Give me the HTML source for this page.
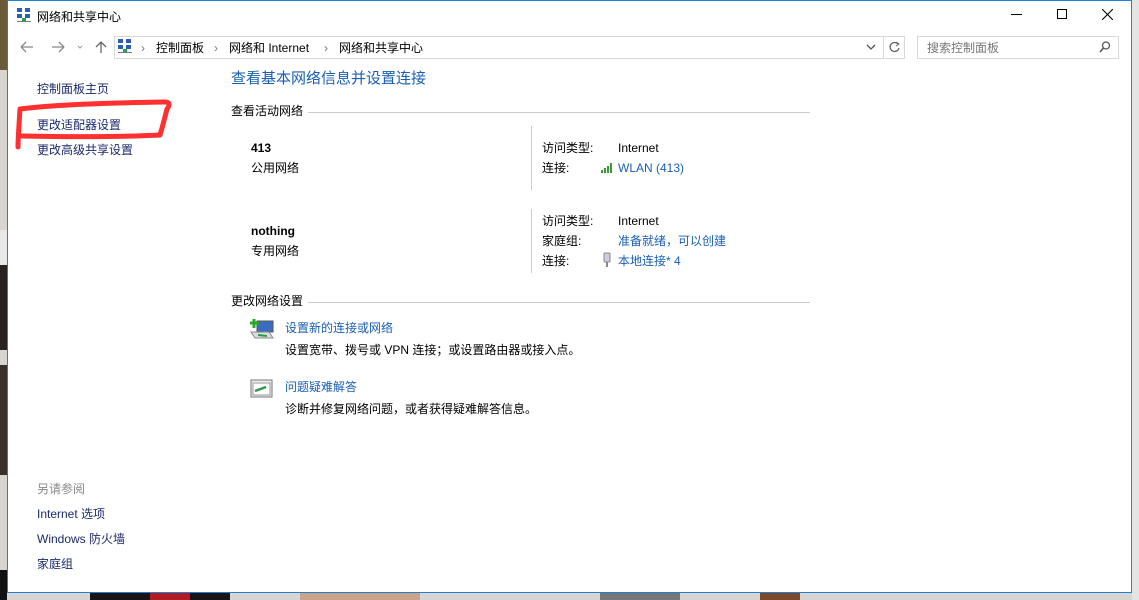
<!DOCTYPE html>
<html><head><meta charset="utf-8">
<style>
*{margin:0;padding:0;box-sizing:border-box}
body{width:1139px;height:600px;overflow:hidden;position:relative;background:#d8d4cf;font-family:"Liberation Sans","Noto Sans CJK SC",sans-serif;font-size:12px;color:#000}
.a{position:absolute;white-space:nowrap;line-height:18px}
.lnk{color:#1a5fb4}
.nav{color:#1b2a6b}
</style></head><body>
<div class="a" style="left:0;top:0;width:7px;height:70px;background:#6a5a3a"></div>
<div class="a" style="left:0;top:230px;width:7px;height:50px;background:#e8e8e8"></div>
<div class="a" style="left:0;top:265px;width:7px;height:85px;background:#2a2220"></div>
<div class="a" style="left:0;top:365px;width:7px;height:110px;background:#3a302a"></div>
<div class="a" style="left:0;top:570px;width:7px;height:30px;background:#111"></div>
<div class="a" style="left:1132px;top:0;width:7px;height:600px;background:#e4e4e4"></div>
<div class="a" style="left:90px;top:593px;width:140px;height:7px;background:#1a1414"></div>
<div class="a" style="left:150px;top:593px;width:40px;height:7px;background:#b01c24"></div>
<div class="a" style="left:300px;top:593px;width:120px;height:7px;background:#c9a48a"></div>
<div class="a" style="left:600px;top:593px;width:80px;height:7px;background:#777"></div>
<div class="a" style="left:760px;top:593px;width:40px;height:7px;background:#7a4a2a"></div>
<div class="a" style="left:7px;top:0;width:1125px;height:593px;background:#fff;border:1px solid #1e7fd8"></div>
<svg class="a" style="left:16px;top:7px" width="16" height="16"><rect x="1" y="1" width="5" height="4" fill="#2b5fb0"/><rect x="9" y="1" width="5" height="4" fill="#2b5fb0"/><rect x="1" y="7" width="5" height="4" fill="#2b5fb0"/><rect x="9" y="7" width="5" height="4" fill="#2b5fb0"/><rect x="6" y="11" width="4" height="3" fill="#22a84a"/><rect x="1" y="14" width="14" height="1" fill="#777"/></svg>
<div class="a" style="left:37px;top:8px">网络和共享中心</div>
<div class="a" style="left:1011px;top:14px;width:11px;height:1px;background:#000"></div>
<div class="a" style="left:1057px;top:9px;width:10px;height:10px;border:1px solid #000"></div>
<svg class="a" style="left:1102px;top:9px" width="11" height="11"><path d="M0 0L11 11M11 0L0 11" stroke="#000" stroke-width="1.1"/></svg>
<svg class="a" style="left:18px;top:39px" width="100" height="16"><path d="M3 8H15M3 8L8 3M3 8L8 13" stroke="#888" stroke-width="1.3" fill="none"/><path d="M34 8H46M46 8L41 3M46 8L41 13" stroke="#888" stroke-width="1.3" fill="none"/><path d="M60 7L62 9L64 7" stroke="#999" fill="none"/><path d="M83 14V3M78 8L83 3L88 8" stroke="#666" stroke-width="1.3" fill="none"/></svg>
<div class="a" style="left:114px;top:36px;width:770px;height:23px;border:1px solid #d9d9d9"></div>
<div class="a" style="left:883px;top:36px;width:22px;height:23px;border:1px solid #d9d9d9"></div>
<svg class="a" style="left:117px;top:38px" width="16" height="16"><rect x="1" y="1" width="5" height="4" fill="#2b5fb0"/><rect x="9" y="1" width="5" height="4" fill="#2b5fb0"/><rect x="1" y="7" width="5" height="4" fill="#2b5fb0"/><rect x="9" y="7" width="5" height="4" fill="#2b5fb0"/><rect x="6" y="11" width="4" height="3" fill="#22a84a"/><rect x="1" y="14" width="14" height="1" fill="#777"/></svg>
<div class="a" style="left:141px;top:39px;color:#777">›</div>
<div class="a" style="left:156px;top:39px">控制面板</div>
<div class="a" style="left:214px;top:39px;color:#777">›</div>
<div class="a" style="left:229px;top:39px">网络和 Internet</div>
<div class="a" style="left:324px;top:39px;color:#777">›</div>
<div class="a" style="left:339px;top:39px">网络和共享中心</div>
<svg class="a" style="left:866px;top:43px" width="10" height="8"><path d="M1 2L5 6L9 2" stroke="#555" stroke-width="1.3" fill="none"/></svg>
<svg class="a" style="left:888px;top:40px" width="14" height="14"><path d="M10 4A4.5 4.5 0 1 0 11 8" stroke="#666" stroke-width="1.3" fill="none"/><path d="M8 2L11 4L8 6" stroke="#666" fill="none"/></svg>
<div class="a" style="left:917px;top:36px;width:202px;height:23px;border:1px solid #d9d9d9"></div>
<div class="a" style="left:927px;top:39px;color:#777">搜索控制面板</div>
<svg class="a" style="left:1098px;top:40px" width="14" height="14"><circle cx="8" cy="5.5" r="3.5" stroke="#555" stroke-width="1.3" fill="none"/><path d="M5.5 8L2 12" stroke="#555" stroke-width="1.6"/></svg>
<div class="a nav" style="left:37px;top:80px">控制面板主页</div>
<div class="a nav" style="left:37px;top:116px">更改适配器设置</div>
<div class="a nav" style="left:37px;top:141px">更改高级共享设置</div>
<svg class="a" style="left:10px;top:95px" width="165" height="60"><path d="M8 52C8 44 9 30 10 14C40 10 90 8 155 7C160 7 160 10 157 14C155 22 153 30 150 40C110 42 60 42 12 41" stroke="#ff3030" stroke-width="5" fill="none" stroke-linecap="round" stroke-linejoin="round"/></svg>
<div class="a" style="left:37px;top:480px;color:#8a8a8a">另请参阅</div>
<div class="a nav" style="left:37px;top:505px">Internet 选项</div>
<div class="a nav" style="left:37px;top:530px">Windows 防火墙</div>
<div class="a nav" style="left:37px;top:555px">家庭组</div>
<div class="a" style="left:231px;top:69px;font-size:15px;line-height:20px;color:#1a5fb4">查看基本网络信息并设置连接</div>
<div class="a" style="left:231px;top:102px">查看活动网络</div>
<div class="a" style="left:308px;top:112px;width:502px;height:1px;background:#ccc"></div>
<div class="a" style="left:251px;top:139px;font-weight:bold">413</div>
<div class="a" style="left:251px;top:159px">公用网络</div>
<div class="a" style="left:531px;top:126px;width:1px;height:64px;background:#ccc"></div>
<div class="a" style="left:542px;top:139px">访问类型:</div>
<div class="a" style="left:618px;top:139px">Internet</div>
<div class="a" style="left:542px;top:159px">连接:</div>
<svg class="a" style="left:600px;top:161px" width="14" height="12"><rect x="1" y="9" width="2" height="3" fill="#3a9a3a"/><rect x="4" y="7" width="2" height="5" fill="#3a9a3a"/><rect x="7" y="5" width="2" height="7" fill="#3a9a3a"/><rect x="10" y="2" width="2" height="10" fill="#3a9a3a"/></svg>
<div class="a lnk" style="left:618px;top:159px">WLAN (413)</div>
<div class="a" style="left:251px;top:222px;font-weight:bold">nothing</div>
<div class="a" style="left:251px;top:242px">专用网络</div>
<div class="a" style="left:531px;top:209px;width:1px;height:64px;background:#ccc"></div>
<div class="a" style="left:542px;top:212px">访问类型:</div>
<div class="a" style="left:618px;top:212px">Internet</div>
<div class="a" style="left:542px;top:232px">家庭组:</div>
<div class="a lnk" style="left:618px;top:232px">准备就绪，可以创建</div>
<div class="a" style="left:542px;top:252px">连接:</div>
<svg class="a" style="left:602px;top:252px" width="10" height="16"><rect x="2" y="1" width="6" height="9" rx="1" fill="#ccd" stroke="#888"/><rect x="4" y="10" width="2" height="5" fill="#888"/></svg>
<div class="a lnk" style="left:618px;top:252px">本地连接* 4</div>
<div class="a" style="left:231px;top:292px">更改网络设置</div>
<div class="a" style="left:308px;top:302px;width:502px;height:1px;background:#ccc"></div>
<svg class="a" style="left:249px;top:318px" width="26" height="24"><rect x="8" y="3" width="16" height="11" fill="#3a6cc0" stroke="#555"/><path d="M2 14L20 14L24 20L6 20Z" fill="#ddd" stroke="#888"/><path d="M9 17L18 18" stroke="#2a9a4a" stroke-width="2"/><path d="M5 1V10M1 5H10" stroke="#2aa82a" stroke-width="3"/></svg>
<div class="a lnk" style="left:285px;top:319px">设置新的连接或网络</div>
<div class="a" style="left:285px;top:341px">设置宽带、拨号或 VPN 连接；或设置路由器或接入点。</div>
<svg class="a" style="left:250px;top:378px" width="24" height="22"><rect x="1" y="2" width="21" height="17" fill="#eee" stroke="#777"/><rect x="3" y="5" width="17" height="12" fill="#fff" stroke="#999"/><path d="M5 13L16 9" stroke="#2a9a4a" stroke-width="2.5"/></svg>
<div class="a lnk" style="left:285px;top:378px">问题疑难解答</div>
<div class="a" style="left:285px;top:400px">诊断并修复网络问题，或者获得疑难解答信息。</div>
</body></html>
